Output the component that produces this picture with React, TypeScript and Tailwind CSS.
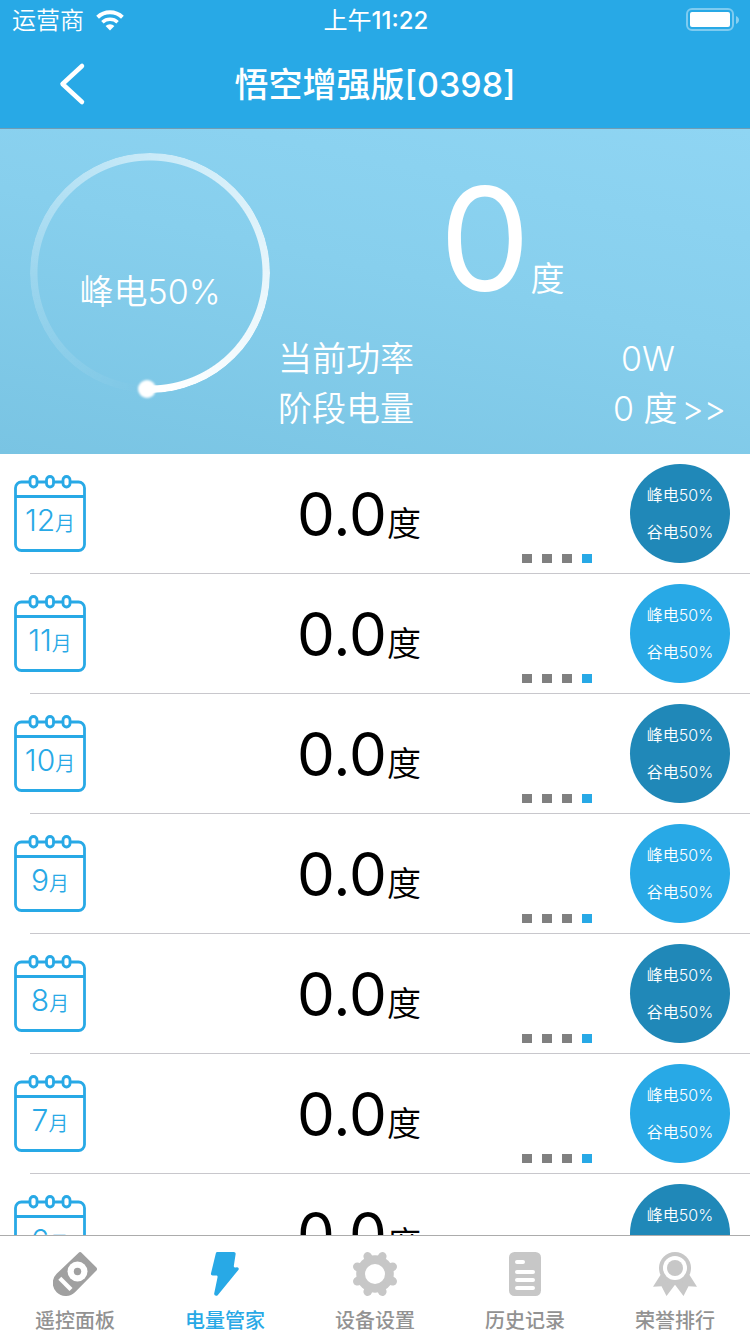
import type { ReactNode } from 'react';

const months = [12, 11, 10, 9, 8, 7, 6];

function StatusBar() {
  return (
    <div className="grid h-10 grid-cols-3 items-center pl-3 pr-[10px] text-2xl">
      <div className="flex items-center gap-3">
        <span className="pt-[2px] font-[350]">运营商</span>
        <svg width="28" height="21" viewBox="0 0 28 21" fill="none" aria-hidden="true">
          <path d="M1.6 7.3a18 18 0 0 1 24.8 0" stroke="#fff" strokeWidth="4" />
          <path d="M6.4 12.2a11.2 11.2 0 0 1 15.2 0" stroke="#fff" strokeWidth="3.6" />
          <path d="M14 20.5 9.6 16a6.4 6.4 0 0 1 8.8 0z" fill="#fff" />
        </svg>
      </div>
      <div className="pt-[2px] text-center font-medium">
        <span className="font-normal">上午</span>11:22
      </div>
      <svg className="justify-self-end" width="54" height="24" viewBox="0 0 54 24" fill="none" aria-hidden="true">
        <rect x="1" y="1" width="46" height="21" rx="5" stroke="#fff" strokeOpacity=".4" strokeWidth="2" />
        <rect x="4" y="4" width="40" height="15" rx="2" fill="#fff" />
        <path d="M50 8c4 1.500 4 6.500 0 8z" fill="#fff" fillOpacity=".45" />
      </svg>
    </div>
  );
}

function Header() {
  return (
    <header className="border-b border-[#6f9db5] bg-[#28a9e6] text-white">
      <StatusBar />
      <div className="grid h-[88px] grid-cols-[90px_1fr_90px] items-center">
        <button type="button" aria-label="返回" className="justify-self-end pr-1">
          <svg width="28" height="44" viewBox="0 0 28 44" fill="none" aria-hidden="true">
            <path d="M24 4 4.500 22 24 40" stroke="#fff" strokeWidth="4.500" strokeLinecap="round" strokeLinejoin="round" />
          </svg>
        </button>
        <h1 className="pt-[2px] text-center text-[34px] leading-[44px] font-medium">悟空增强版[0398]</h1>
      </div>
    </header>
  );
}

function Gauge() {
  return (
    <div className="relative grid size-60 shrink-0 place-items-center">
      <div className="absolute inset-0 rounded-full bg-[conic-gradient(from_183deg,rgba(255,255,255,0)_0%,rgba(255,255,255,0.2)_23%,rgba(255,255,255,0.54)_49%,rgba(255,255,255,0.8)_74%,#fff_97%)] [mask-image:radial-gradient(closest-side,transparent_112px,#000_113px)]" />
      <div className="absolute bottom-[-5px] left-[108px] size-[18px] rounded-full bg-white blur-[1px]" />
      <span className="mt-[38px] text-[34px] leading-[44px] font-[350]">峰电50%</span>
    </div>
  );
}

function Summary() {
  return (
    <section className="flex gap-2 bg-[linear-gradient(192deg,#8fd5f3_0%,#87cfed_45%,#79c4e3_100%)] pt-6 pl-[30px] text-white">
      <Gauge />
      <div className="flex flex-1 flex-col gap-[9px] pb-5 text-[34px] font-[350]">
        <div className="flex flex-1 items-baseline justify-center pr-6">
          <span className="text-[144px] leading-[172px] font-normal">0</span>
          <span className="leading-[44px]">度</span>
        </div>
        <div className="grid grid-cols-[1fr_84px_60px] leading-[50px] whitespace-nowrap">
          <span>当前功率</span>
          <span className="text-center">0W</span>
          <span />
          <span>阶段电量</span>
          <a href="#stage" className="col-span-2 flex gap-1 pl-[7px]">
            <span>0 度</span>
            <span>&gt;&gt;</span>
          </a>
        </div>
      </div>
    </section>
  );
}

function Calendar({ month }: { month: number }) {
  return (
    <div className="relative ml-[14px] h-[77px] w-[72px] text-[#28a9e6]">
      <svg width="72" height="77" viewBox="0 0 72 77" fill="none" stroke="currentColor" strokeWidth="2.800" aria-hidden="true">
        <rect x="1.500" y="7" width="69" height="68.500" rx="6" />
        <path d="M1.500 21.500h69" />
        <rect x="16" y="1.500" width="7" height="10.500" rx="3.500" fill="#fff" />
        <rect x="32.500" y="1.500" width="7" height="10.500" rx="3.500" fill="#fff" />
        <rect x="49" y="1.500" width="7" height="10.500" rx="3.500" fill="#fff" />
      </svg>
      <div className="absolute inset-x-0 top-[25px] flex items-baseline justify-center leading-[40px] font-[350]">
        <span className="text-3xl leading-[40px]">{month}</span>
        <span className="text-xl leading-[40px]">月</span>
      </div>
    </div>
  );
}

function MonthRow({ month, dark }: { month: number; dark: boolean }) {
  return (
    <li>
      <div className="grid h-[119px] grid-cols-[100px_1fr_130px]">
        <div className="pt-[21px]">
          <Calendar month={month} />
        </div>
        <div className="grid">
          <div className="col-start-1 row-start-1 flex items-baseline justify-center self-center pt-[10px] pr-[2px] leading-[72px] text-black">
            <span className="text-[60px]">0.0</span>
            <span className="text-[34px] font-[350]">度</span>
          </div>
          <div className="col-start-1 row-start-1 mr-7 mb-[10px] flex gap-[10px] self-end justify-self-end">
            <i className="h-[9px] w-[10px] bg-[#808080]" />
            <i className="h-[9px] w-[10px] bg-[#808080]" />
            <i className="h-[9px] w-[10px] bg-[#808080]" />
            <i className="h-[9px] w-[10px] bg-[#28a9e6]" />
          </div>
        </div>
        <div
          className={
            (dark ? 'bg-[#2088b8]' : 'bg-[#28a9e6]') +
            ' mt-[10px] ml-[10px] flex h-[99px] w-[100px] flex-col items-center justify-center rounded-full text-base leading-[37px] font-[350] text-white'
          }
        >
          <span>峰电50%</span>
          <span>谷电50%</span>
        </div>
      </div>
      <div className="ml-[30px] h-px bg-[#c8c7cc]" />
    </li>
  );
}

const remoteIcon = (
  <svg width="44" height="44" viewBox="0 0 44 44" aria-hidden="true">
    <path d="M25.400.9a2.400 2.400 0 0 1 3.400 0L43.200 15.300a2.400 2.400 0 0 1 0 3.400L22 40.200A13 13 0 0 1 3.600 21.800z" fill="#a0a0a0" />
    <circle cx="24.500" cy="19.500" r="10" fill="#fff" />
    <circle cx="24.500" cy="19.500" r="3.700" fill="#a0a0a0" />
    <path d="m6.800 26.300 11.200 11.200" stroke="#fff" strokeWidth="4.200" />
  </svg>
);

const boltIcon = (
  <svg width="44" height="44" viewBox="0 0 44 44" aria-hidden="true">
    <path d="M10 0h16.200c1.400 0 2.100 1 1.900 2.300L26.300 14c0 1 .7 1.600 1.700 1.500l1.600-.2c1.500 0 2.200 1.700 1.200 2.800L10.400 43c-1.500 1.700-4 .6-3.700-1.500L10 25.400c.3-1.200-.2-2-1.400-2H5.200c-1.300 0-2-.9-1.700-2.100L8.300 1.500C8.500.5 9 0 10 0z" fill="#28a9e6" transform="translate(4.500)" />
  </svg>
);

const gearIcon = (
  <svg width="44" height="44" viewBox="0 0 44 44" aria-hidden="true">
    <g fill="#c7c7c7">
      <circle cx="22" cy="22" r="18.800" />
      <g stroke="#c7c7c7" strokeWidth="8.500" strokeLinecap="round">
        <path d="M14.700 4.300 29.300 39.700M29.300 4.300 14.700 39.700M4.300 14.700 39.700 29.300M39.700 14.700 4.300 29.300" />
      </g>
    </g>
    <circle cx="22" cy="22" r="10" fill="#fff" />
  </svg>
);

const historyIcon = (
  <svg width="44" height="44" viewBox="0 0 44 44" aria-hidden="true">
    <rect x="6" y="0" width="32" height="44" rx="5.500" fill="#c7c7c7" />
    <path d="M14 10h6M14 20h16M14 28h16M14 36h16" stroke="#fff" strokeWidth="4" strokeLinecap="round" />
  </svg>
);

const medalIcon = (
  <svg width="44" height="44" viewBox="0 0 44 44" aria-hidden="true">
    <path d="M7.500 23 0 34.700l8.500-.4 5 9.700L22 32.800 30.500 44l5-9.700 8.500.4L36.500 23 22 16z" fill="#c7c7c7" />
    <circle cx="22" cy="16" r="16" fill="#c7c7c7" />
    <circle cx="22" cy="16" r="12" fill="#fff" />
    <circle cx="22" cy="16" r="8" fill="#c7c7c7" />
  </svg>
);

const tabs: { label: string; icon: ReactNode; active?: boolean }[] = [
  { label: '遥控面板', icon: remoteIcon },
  { label: '电量管家', icon: boltIcon, active: true },
  { label: '设备设置', icon: gearIcon },
  { label: '历史记录', icon: historyIcon },
  { label: '荣誉排行', icon: medalIcon },
];

function TabBar() {
  return (
    <nav className="grid shrink-0 grid-cols-5 border-t border-[#acacac] bg-white">
      {tabs.map((tab) => (
        <button
          key={tab.label}
          type="button"
          aria-current={tab.active ? 'page' : undefined}
          className={
            (tab.active ? 'text-[#28a9e6]' : 'text-[#929292]') +
            ' flex flex-col items-center gap-[13px] pt-4 pb-px text-xl leading-6 font-medium'
          }
        >
          {tab.icon}
          <span>{tab.label}</span>
        </button>
      ))}
    </nav>
  );
}

export default function App() {
  return (
    <div className="flex h-screen flex-col bg-white font-[Inter,'Noto_Sans_CJK_SC',sans-serif]">
      <Header />
      <Summary />
      <ul className="min-h-0 flex-1 overflow-y-auto [scrollbar-width:none]">
        {months.map((month, index) => (
          <MonthRow key={month} month={month} dark={index % 2 === 0} />
        ))}
      </ul>
      <TabBar />
    </div>
  );
}
